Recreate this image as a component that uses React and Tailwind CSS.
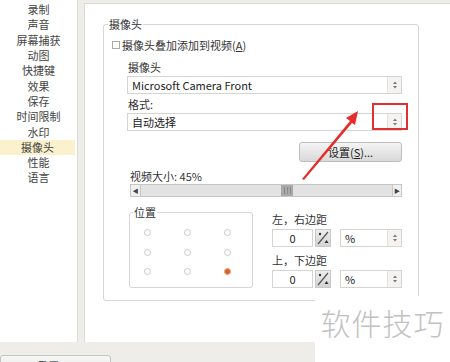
import React from 'react'

const menu = ['录制', '声音', '屏幕捕获', '动图', '快捷键', '效果', '保存', '时间限制', '水印', '摄像头', '性能', '语言']

function SpinMark() {
  return (
    <svg width="6" height="8" viewBox="0 0 6 8" className="text-[#777]">
      <path d="M3 0.5 L5 3 H1 Z M3 7.5 L5 5 H1 Z" fill="currentColor" />
    </svg>
  )
}

function Select({ value, className = '' }) {
  return (
    <div className={`flex items-center h-[18px] border border-[#d6d4d0] bg-white ${className}`}>
      <span className="flex-1 pl-[4px] text-[11px] text-[#222] truncate">{value}</span>
      <span className="w-[14px] h-full border-l border-[#e2e0dc] bg-[#f4f3f1] flex items-center justify-center">
        <SpinMark />
      </span>
    </div>
  )
}

function Radio({ on }) {
  return (
    <span className={`w-[7px] h-[7px] rounded-full border ${on ? 'border-[#e9a27a] bg-[#d9622a]' : 'border-[#c9c9c9] bg-white'}`} />
  )
}

function DiagSpin() {
  return (
    <div className="w-[16px] h-[18px] border border-[#c8c8c8] bg-gradient-to-b from-[#ededed] to-[#d4d4d4]">
      <svg width="14" height="16" viewBox="0 0 14 16">
        <line x1="12" y1="2" x2="2" y2="14" stroke="#555" strokeWidth="1.2" />
        <circle cx="4" cy="4" r="1.2" fill="#333" />
        <path d="M10.5 10 L12.5 13 H8.5 Z" fill="#333" />
      </svg>
    </div>
  )
}

function MarginRow({ label }) {
  return (
    <div className="flex flex-col">
      <span className="text-[11px] text-[#333] leading-[14px] h-[14px]">{label}</span>
      <div className="flex items-center mt-[3px]">
        <div className="w-[41px] h-[18px] border border-[#d6d4d0] bg-white flex items-center justify-center text-[11px] text-[#222]">0</div>
        <div className="ml-[2px]"><DiagSpin /></div>
        <Select value="%" className="w-[62px] ml-[9px]" />
      </div>
    </div>
  )
}

export default function App() {
  return (
    <div className="relative w-[450px] h-[362px] overflow-hidden bg-[#efedea] font-['Noto_Sans_CJK_SC','Noto_Sans',sans-serif] text-[#333]">
      <div className="flex h-[342px]">
        <aside className="w-[78px] bg-white border-r border-[#dcdad6] pt-[2px] text-[#444]">
          {menu.map((m) => (
            <div
              key={m}
              className={`h-[15.3px] flex items-center justify-center text-[11px] leading-none ${m === '摄像头' ? 'bg-[#fbf1cc] mr-[2px]' : ''}`}
            >
              {m}
            </div>
          ))}
        </aside>

        <main className="ml-[6px] mt-[3px] flex-1 bg-white border-l border-t border-[#dcdad6] pl-[18px] pt-[20px]">
          <div className="relative w-[316px] h-[277px] border border-[#d8d6d2] rounded-[3px] pl-[23px] pr-[16px]">
            <span className="absolute -top-[8px] left-[4px] bg-white px-[1px] text-[11px] leading-[14px]">摄像头</span>

            <div className="flex items-center h-[14px] mt-[13px] -ml-[15px]">
              <span className="w-[8px] h-[8px] border border-[#aaa] bg-white mr-[2px]" />
              <span className="text-[11px] leading-none">摄像头叠加添加到视频(<span className="underline">A</span>)</span>
            </div>

            <div className="text-[11px] leading-[14px] mt-[8px] ml-[1px]">摄像头</div>
            <Select value="Microsoft Camera Front" className="mt-[2px]" />
            <div className="text-[11px] leading-[14px] mt-[3px] ml-[1px]">格式:</div>
            <Select value="自动选择" className="mt-[2px]" />

            <div className="flex justify-end mt-[11px]">
              <button className="w-[103px] h-[20px] rounded-[3px] border border-[#bdbdbd] bg-gradient-to-b from-[#f4f4f4] to-[#d9d9d9] text-[11px] text-[#222] flex items-center justify-center">
                设置(<span className="underline">S</span>)...
              </button>
            </div>

            <div className="text-[11px] leading-[14px] mt-[7px] ml-[3px]">视频大小: 45%</div>
            <div className="flex items-center h-[13px] ml-[3px] mt-[1px] border border-[#c6c6c6] bg-[#e2e2e2]">
              <span className="w-[10px] h-full bg-[#f0f0f0] border-r border-[#c6c6c6] flex items-center justify-center text-[6px] text-[#444]">◀</span>
              <div className="flex-1 h-full flex">
                <div className="w-[140px]" />
                <div className="w-[12px] h-full bg-[#a9a9a9] flex items-center justify-center gap-[2px]">
                  <span className="w-px h-[7px] bg-[#8a8a8a]" />
                  <span className="w-px h-[7px] bg-[#8a8a8a]" />
                  <span className="w-px h-[7px] bg-[#8a8a8a]" />
                </div>
              </div>
              <span className="w-[9px] h-full bg-[#f0f0f0] border-l border-[#c6c6c6] flex items-center justify-center text-[6px] text-[#444]">▶</span>
            </div>

            <div className="flex mt-[15px] ml-[2px]">
              <div className="relative w-[124px] h-[76px] border border-[#d8d6d2] rounded-[3px]">
                <span className="absolute -top-[8px] left-[3px] bg-white px-[1px] text-[11px] leading-[14px]">位置</span>
                <div className="grid grid-cols-[40px_40px_40px] gap-y-[12.5px] pt-[16px] pl-[14px]">
                  {[0, 1, 2, 3, 4, 5, 6, 7, 8].map((i) => (
                    <div key={i} className="flex"><Radio on={i === 8} /></div>
                  ))}
                </div>
              </div>
              <div className="ml-[19px] flex flex-col gap-[6px]">
                <MarginRow label="左，右边距" />
                <MarginRow label="上，下边距" />
              </div>
            </div>
          </div>
        </main>
      </div>

      <div className="flex justify-between">
        <button className="mt-[13px] w-[111px] h-[22px] rounded-[3px] border border-[#c4c4c4] bg-gradient-to-b from-[#f7f7f7] to-[#e4e4e4] text-[11px] text-[#222] pt-[2px] flex justify-center items-start">
          重置(R)
        </button>
        <button className="mt-[14px] -mr-[10px] w-[40px] h-[22px] rounded-[3px] border border-[#c4c4c4] bg-[#f4f4f4]" />
      </div>

      <div className="absolute right-0 bottom-0 w-[135px] h-[66px] bg-white flex items-start justify-center pt-[10px]">
        <span className="text-[30px] leading-[32px] font-light text-[#c2c2c2] tracking-[1px]">软件技巧</span>
      </div>

      <svg className="absolute left-0 top-0 pointer-events-none" width="450" height="362">
        <rect x="373" y="104" width="34" height="25" fill="none" stroke="#e03030" strokeWidth="2" />
        <path d="M302 179 L350 121 L346 118 L358 111 L355 125 L352 123 L304 180 Z" fill="#e52d2d" />
      </svg>
    </div>
  )
}
